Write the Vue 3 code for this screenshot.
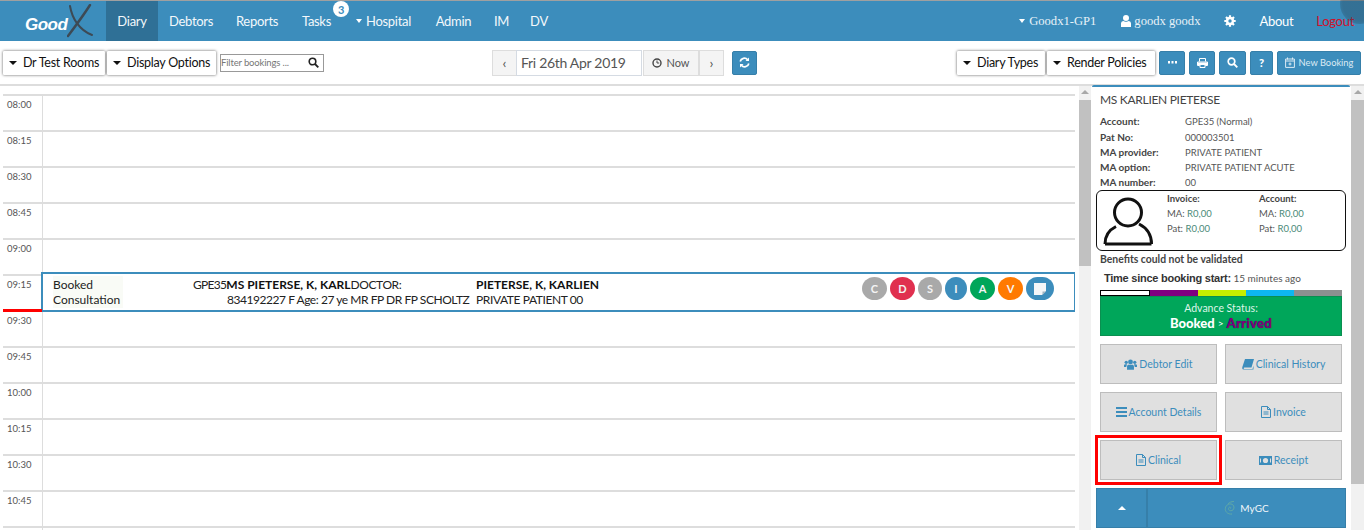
<script setup>
const navItems = [
  { label: 'Diary', w: 52, active: true },
  { label: 'Debtors', w: 66 },
  { label: 'Reports', w: 66 },
  { label: 'Tasks', w: 53 }
]
const navAfter = [
  { label: 'Admin', w: 59 },
  { label: 'IM', w: 37 },
  { label: 'DV', w: 38 }
]
const times = ['08:00','08:15','08:30','08:45','09:00','09:15','09:30','09:45','10:00','10:15','10:30','10:45','']
const details = [
  ['Account:', 'GPE35 (Normal)'],
  ['Pat No:', '000003501'],
  ['MA provider:', 'PRIVATE PATIENT'],
  ['MA option:', 'PRIVATE PATIENT ACUTE'],
  ['MA number:', '00']
]
const circles = [
  { t: 'C', c: '#a9a9a9', w: 25 },
  { t: 'D', c: '#e0304f', w: 25 },
  { t: 'S', c: '#a9a9a9', w: 24 },
  { t: 'I', c: '#3c8dbc', w: 22 },
  { t: 'A', c: '#00a65a', w: 25 },
  { t: 'V', c: '#ff7a00', w: 25 }
]
const stages = ['#fff', '#800080', '#c6ee00', '#0db7f0', '#8d9090']
</script>

<template>
  <div class="page">
    <header class="nav">
      <div class="logo">
        <span class="good">Good</span>
        <svg class="logo-x" width="26" height="34" viewBox="0 0 26 34">
          <path d="M23 1C18 9 10 20 1 32" stroke="#3d4a55" stroke-width="2.4" fill="none" stroke-linecap="round"/>
          <path d="M3 2C5 14 12 26 25 31" stroke="#3d4a55" stroke-width="2" fill="none" stroke-linecap="round"/>
        </svg>
      </div>
      <a v-for="n in navItems" :key="n.label" class="nav-item" :class="{ active: n.active }" :style="{ width: n.w + 'px' }">{{ n.label }}</a>
      <span class="badge">3</span>
      <a class="nav-item hospital"><i class="caret white"></i>Hospital</a>
      <a v-for="n in navAfter" :key="n.label" class="nav-item" :style="{ width: n.w + 'px' }">{{ n.label }}</a>
      <div class="nav-right">
        <span class="serif"><i class="caret white"></i>Goodx1-GP1</span>
        <span class="serif user">
          <svg width="10" height="12" viewBox="0 0 10 12"><circle cx="5" cy="3" r="3" fill="#fff"/><path d="M0 12V8.500C0 6.800 1.500 6 2.500 6 3.500 7 6.500 7 7.500 6 8.500 6 10 6.800 10 8.500V12Z" fill="#fff"/></svg>
          goodx goodx
        </span>
        <svg class="gear" width="12" height="12" viewBox="0 0 12 12"><path d="M6 .3V11.700M.3 6H11.700M2 2L10 10M10 2L2 10" stroke="#fff" stroke-width="2.200"/><circle cx="6" cy="6" r="4.200" fill="#fff"/><circle cx="6" cy="6" r="1.700" fill="#3c8dbc"/></svg>
        <span class="about">About</span>
        <span class="logout">Logout</span>
      </div>
    </header>

    <div class="toolbar">
      <div class="tool-left">
        <button class="drop"><i class="caret"></i>Dr Test Rooms</button>
        <button class="drop"><i class="caret"></i>Display Options</button>
        <div class="filter">
          <span>Filter bookings ...</span>
          <svg width="11" height="11" viewBox="0 0 11 11"><circle cx="4.500" cy="4.500" r="3.300" fill="none" stroke="#222" stroke-width="1.600"/><path d="M7 7L10.300 10.300" stroke="#222" stroke-width="1.800"/></svg>
        </div>
      </div>
      <div class="tool-mid">
        <span class="dbtn prev">‹</span>
        <span class="date">Fri 26th Apr 2019</span>
        <span class="dbtn now">
          <svg width="10" height="10" viewBox="0 0 10 10"><circle cx="5" cy="5" r="4" fill="none" stroke="#444" stroke-width="1.400"/><path d="M5 2.500V5H7.200" fill="none" stroke="#444" stroke-width="1"/></svg>
          Now
        </span>
        <span class="dbtn next">›</span>
        <span class="bbtn refresh">
          <svg width="11" height="11" viewBox="0 0 11 11"><path d="M1.200 4.500A4.200 4.200 0 0 1 8.600 2.800M9.800 6.500A4.200 4.200 0 0 1 2.400 8.200" fill="none" stroke="#fff" stroke-width="1.700"/><path d="M10 0.500V4H6.500ZM1 10.500V7H4.500Z" fill="#fff"/></svg>
        </span>
      </div>
      <div class="tool-right">
        <button class="drop types"><i class="caret"></i>Diary Types</button>
        <button class="drop policies"><i class="caret"></i>Render Policies</button>
        <span class="bbtn w26">
          <svg width="9" height="3" viewBox="0 0 9 3"><path d="M0 0H2V2.500H0ZM3.500 0H5.500V2.500H3.500ZM7 0H9V2.500H7Z" fill="#fff"/></svg>
        </span>
        <span class="bbtn w26">
          <svg width="11" height="10" viewBox="0 0 11 10"><path d="M2.500 3.500V.5H8.500V3.500M.5 7.500V4H10.500V7.500H8.500V6H2.500V7.500ZM3 6.500H8V9.500H3Z" fill="none" stroke="#fff"/><path d="M1 4.500H10V7H1Z" fill="#fff"/></svg>
        </span>
        <span class="bbtn w27">
          <svg width="11" height="11" viewBox="0 0 11 11"><circle cx="4.500" cy="4.500" r="3.300" fill="none" stroke="#fff" stroke-width="1.700"/><path d="M7 7L10.300 10.300" stroke="#fff" stroke-width="1.900"/></svg>
        </span>
        <span class="bbtn w23 q">?</span>
        <span class="bbtn newb">
          <svg width="10" height="11" viewBox="0 0 10 11"><path d="M0.600 2H9.400V10.400H0.600ZM0.600 4H9.400M2.500 0.500V2.500M7.500 0.500V2.500M3.500 7H6.500M5 5.500V8.500" fill="none" stroke="#dcebf4" stroke-width="1"/></svg>
          New Booking
        </span>
      </div>
    </div>

    <main class="body">
      <section class="diary">
        <div v-for="t in times" :key="t" class="row">
          <span class="time">{{ t }}</span>
          <span class="slot"></span>
          <i v-if="t === '09:15'" class="now-line"></i>
          <div v-if="t === '09:15'" class="booking">
            <div class="b-status"><span>Booked</span><span>Consultation</span></div>
            <div class="b-info">
              <div class="b-top"><span class="acc">GPE35</span><b>MS PIETERSE, K, KARL</b><span class="doc">DOCTOR:</span></div>
              <div class="b-sub">834192227 F Age: 27 ye MR FP DR FP SCHOLTZ</div>
            </div>
            <div class="b-pat"><b>PIETERSE, K, KARLIEN</b><span class="pp">PRIVATE PATIENT 00</span></div>
            <div class="b-icons">
              <span v-for="c in circles" :key="c.t" class="circle" :style="{ background: c.c, width: c.w + 'px' }">{{ c.t }}</span>
              <span class="circle note">
                <svg width="12" height="12" viewBox="0 0 12 12"><path d="M0 0H12V8L8 12H0Z" fill="#f4f6f8"/><path d="M8.500 12V8.500H12Z" fill="#9fb4c2"/></svg>
              </span>
            </div>
          </div>
        </div>
      </section>

      <div class="scroll left-scroll"><i class="arrow"></i><i class="thumb"></i></div>

      <aside class="panel">
        <h3>MS KARLIEN PIETERSE</h3>
        <dl class="details">
          <template v-for="d in details" :key="d[0]">
            <dt>{{ d[0] }}</dt>
            <dd>{{ d[1] }}</dd>
          </template>
        </dl>
        <div class="balance">
          <svg class="avatar" width="50" height="50" viewBox="0 0 50 50">
            <circle cx="25" cy="15.500" r="13.500" fill="none" stroke="#111" stroke-width="3"/>
            <path d="M2 47C2 38 6 33 13 29.500M36 27C44 31 48.500 38 48.500 47M2 47H48.500" fill="none" stroke="#111" stroke-width="3"/>
          </svg>
          <div class="bal-col first"><b>Invoice:</b><span>MA: <em>R0,00</em></span><span>Pat: <em>R0,00</em></span></div>
          <div class="bal-col second"><b>Account:</b><span>MA: <em>R0,00</em></span><span>Pat: <em>R0,00</em></span></div>
        </div>
        <p class="benefits">Benefits could not be validated</p>
        <p class="since"><b>Time since booking start:</b> <span>15 minutes ago</span></p>
        <div class="stages">
          <i v-for="(s, i) in stages" :key="s" :class="{ current: i === 0 }" :style="{ background: s }"></i>
        </div>
        <div class="advance">
          <span>Advance Status:</span>
          <div class="adv-line"><b>Booked</b><small>&gt;</small><b class="arrived">Arrived</b></div>
        </div>
        <div class="actions">
          <a class="act">
            <svg width="13" height="11" viewBox="0 0 15 12"><circle cx="7.500" cy="3" r="2.800" fill="#3c8dbc"/><circle cx="2.600" cy="3.500" r="1.900" fill="#3c8dbc"/><circle cx="12.400" cy="3.500" r="1.900" fill="#3c8dbc"/><path d="M3.500 12V8.500C3.500 7 4.500 6.300 5.500 6.300H9.500C10.500 6.300 11.500 7 11.500 8.500V12ZM0 9V7C0 6 .8 5.600 2 5.600H3.500L2.600 8.500V9ZM15 9V7C15 6 14.200 5.600 13 5.600H11.500L12.400 8.500V9Z" fill="#3c8dbc"/></svg>
            Debtor Edit
          </a>
          <a class="act">
            <svg width="12" height="12" viewBox="0 0 12 12"><path d="M3 1H12L9.500 9.500H2.300C1.500 9.500 1.500 11 2.300 11H10.500L11.500 7.500V11.500H1.500C0 11.500 0 9.500 .5 8.500Z" fill="#3c8dbc"/></svg>
            Clinical History
          </a>
          <a class="act">
            <svg width="11" height="10" viewBox="0 0 11 10"><path d="M0 0H11V2H0ZM0 4H11V6H0ZM0 8H11V10H0Z" fill="#3c8dbc"/></svg>
            Account Details
          </a>
          <a class="act">
            <svg width="10" height="12" viewBox="0 0 10 12"><path d="M.5 .5H6.500L9.500 3.500V11.500H.5ZM6.500 .5V3.500H9.500M2.500 6H7.500M2.500 8H7.500" fill="none" stroke="#3c8dbc" stroke-width="1"/></svg>
            Invoice
          </a>
          <a class="act highlighted">
            <svg width="10" height="12" viewBox="0 0 10 12"><path d="M.5 .5H6.500L9.500 3.500V11.500H.5ZM6.500 .5V3.500H9.500M2.500 6H7.500M2.500 8H7.500" fill="none" stroke="#3c8dbc" stroke-width="1"/></svg>
            Clinical
          </a>
          <a class="act">
            <svg width="13" height="9" viewBox="0 0 13 9"><path d="M0 0H13V9H0Z" fill="#3c8dbc"/><circle cx="6.500" cy="4.500" r="2.600" fill="#e0e0e0"/><path d="M1.500 2.500V6.500M11.500 2.500V6.500" stroke="#e0e0e0"/></svg>
            Receipt
          </a>
        </div>
        <div class="mygc">
          <span class="mygc-toggle"><i class="caret up"></i></span>
          <span class="mygc-label">
            <svg width="13" height="14" viewBox="0 0 13 14"><path d="M6.500 7.500C7.500 6.500 6 5.500 5 6.500 3.500 8 5.500 10.500 8 9.500 11 8.300 10.500 3.500 7 3 4 2.500 1 5 1.300 8.500 1.500 11 4 13.500 8 13M10 .5C7 .5 5.500 1.500 4 2.800" fill="none" stroke="#5fa8a8" stroke-width="1"/></svg>
            MyGC
          </span>
        </div>
      </aside>

      <div class="scroll right-scroll"><i class="arrow"></i><i class="thumb"></i></div>
    </main>
  </div>
</template>

<style>
html, body { margin: 0; height: 530px; overflow: hidden; background: #fff; }
</style>

<style scoped>
.page {
  width: 1364px; height: 530px; overflow: hidden; display: flex; flex-direction: column;
  font-family: "Lato", "Noto Sans", sans-serif; color: #222; box-sizing: border-box;
}
i { display: block; font-style: normal; }
button { font-family: inherit; cursor: pointer; }

.nav {
  height: 40px; flex: none; display: flex; align-items: center; background: #3c8dbc;
  border-top: 1px solid #a0a0a0; color: #fff; font-size: 13px; letter-spacing: -.3px; position: relative;
}
.nav::after {
  content: ""; position: absolute; right: -16px; top: -17px; width: 40px; height: 40px; border-radius: 50%;
  background: radial-gradient(circle, rgba(40,70,90,.4) 0 60%, rgba(40,70,90,0) 100%);
}
.logo { width: 106px; height: 40px; flex: none; display: flex; align-items: center; padding-left: 25px; box-sizing: border-box; }
.good { font-weight: 900; font-style: italic; font-size: 17px; letter-spacing: -.5px; color: #fff; font-family: "Liberation Sans", sans-serif; margin-top: 8px; }
.nav-item { height: 40px; display: flex; align-items: center; justify-content: center; flex: none; color: #f3f8fb; }
.nav-item.active { background: #2f7096; }
.badge {
  width: 16px; height: 16px; border-radius: 50%; background: #fff; color: #3c8dbc; font-size: 11px; font-weight: 700;
  display: flex; align-items: center; justify-content: center; margin: -24px 0 0 -10px; flex: none;
}
.hospital { margin-left: 7px; width: 68px; justify-content: flex-start; gap: 4px; }
.caret { width: 0; height: 0; border-left: 4px solid transparent; border-right: 4px solid transparent; border-top: 4px solid #111; flex: none; }
.caret.white { border-top-color: #fff; border-left-width: 3.500px; border-right-width: 3.500px; }
.caret.up { border-top: 0; border-bottom: 4px solid #fff; }
.nav-right { margin-left: auto; display: flex; align-items: center; height: 40px; padding-right: 10px; }
.serif { font-family: "Liberation Serif", serif; font-size: 12.600px; letter-spacing: 0; display: flex; align-items: center; gap: 4px; color: #e8f2f8; }
.user { margin-left: 25px; gap: 3px; }
.gear { margin-left: 24px; }
.about { margin-left: 23px; }
.logout { margin-left: 23px; color: #d0112b; }

.toolbar {
  height: 43px; flex: none; display: flex; align-items: center;
  border-bottom: 2px solid #ddd; box-sizing: content-box; padding: 0 3px;
}
.tool-left { display: flex; align-items: center; gap: 2px; }
.tool-mid { display: flex; align-items: center; margin-left: 168px; }
.tool-right { display: flex; align-items: center; margin-left: auto; gap: 4px; }
.drop {
  height: 24px; border: 0; background: #fff; box-shadow: 0 0 3px rgba(0,0,0,.65); display: flex; align-items: center; gap: 6px;
  padding: 0 4px 0 6px; font-size: 12.500px; letter-spacing: -.25px; color: #111; border-radius: 1px; white-space: nowrap; width: 102px;
}
.drop + .drop { width: 109px; }
.drop.types { width: 88px; margin-right: -2px; }
.drop.policies { width: 108px; }
.filter {
  margin-left: 2px; width: 104px; height: 18px; box-sizing: border-box; border: 1px solid #999; display: flex; align-items: center;
  justify-content: space-between; padding: 0 4px 0 0; font-size: 9.500px; letter-spacing: -.15px; color: #777;
}
.dbtn {
  height: 26px; background: #f4f4f4; border: 1px solid #ddd; box-sizing: border-box; display: flex; align-items: center; justify-content: center;
  color: #555; font-size: 11px;
}
.prev { width: 25px; font-size: 14px; }
.next { width: 25px; font-size: 14px; }
.now { width: 56px; gap: 4px; margin-left: 1px; }
.date {
  width: 126px; height: 26px; box-sizing: border-box; border: 1px solid #d5dbe3; display: flex; align-items: center; padding-left: 4px;
  font-size: 14px; letter-spacing: -.3px; color: #555; margin-left: -1px; background: #fff; white-space: nowrap;
}
.bbtn {
  height: 24px; background: #3c8dbc; border: 1px solid #367fa9; border-radius: 2px; box-sizing: border-box; display: flex; align-items: center;
  justify-content: center; color: #fff; flex: none;
}
.refresh { width: 25px; margin-left: 8px; }
.w26 { width: 26px; }
.w27 { width: 27px; }
.w23 { width: 23px; }
.q { font-weight: 900; font-size: 11px; }
.newb { width: 84px; gap: 4px; font-size: 9.300px; color: #dcebf4; }

.body { flex: 1; min-height: 0; display: flex; }
.diary { width: 1072px; margin-left: 3px; padding-top: 8px; flex: none; overflow: hidden; }
.row { height: 36px; box-sizing: border-box; border-top: 2px solid #ddd; display: flex; position: relative; }
.time { width: 40px; box-sizing: border-box; border-right: 1px solid #ddd; font-size: 9.500px; color: #555; padding: 3px 0 0 4px; flex: none; }
.slot { flex: 1; }
.now-line { position: absolute; left: 0; bottom: -2px; width: 39px; height: 3px; background: #f00; z-index: 2; }
.booking {
  position: absolute; left: 38px; right: -1px; top: -4px; height: 40px; box-sizing: border-box; border: 2px solid #3c8dbc;
  background: #fff; display: flex; font-size: 12px; line-height: 15px; color: #222; z-index: 1; padding-top: 2px;
}
.booking b { font-weight: 700; color: #111; }
.b-status { width: 70px; margin-left: 10px; display: flex; flex-direction: column; background: #f9fbf6; padding-top: 1px; white-space: nowrap; flex: none; height: 31px; }
.b-info { margin-left: 70px; width: 283px; flex: none; padding-top: 1px; white-space: nowrap; }
.b-top { display: flex; }
.acc { letter-spacing: -.7px; }
.doc { letter-spacing: -.4px; }
.b-sub { padding-left: 34px; letter-spacing: -.45px; }
.b-pat { display: flex; flex-direction: column; padding-top: 1px; white-space: nowrap; }
.pp { letter-spacing: -.4px; }
.b-icons { position: absolute; left: 819px; top: 3px; display: flex; gap: 3px; }
.circle {
  height: 23px; border-radius: 50%; display: flex; align-items: center; justify-content: center; color: #f4f4f4; font-weight: 700; font-size: 11px;
}
.note { width: 28px; background: #3c8dbc; border-radius: 12px; }

.scroll { background: #f1f1f1; flex: none; display: flex; flex-direction: column; align-items: center; }
.left-scroll { width: 12px; margin-left: 4px; margin-right: 1px; height: 444px; }
.right-scroll { width: 13px; margin-left: 1px; }
.arrow { width: 0; height: 0; border-left: 4px solid transparent; border-right: 4px solid transparent; border-bottom: 4px solid #a8a8a8; margin: 4px 0 6px; }
.scroll .thumb { width: 100%; background: #c1c1c1; }
.left-scroll .thumb { height: 166px; }
.right-scroll .thumb { height: 384px; }

.panel {
  width: 258px; flex: none; box-sizing: border-box; border-top: 2px solid #3c8dbc; border-radius: 2px 2px 0 0; padding: 6px 4px 0; margin-top: -1px; background: #fff; font-size: 9.500px; color: #555;
}
h3 { margin: 0 0 0 4px; font-weight: 400; font-size: 12px; letter-spacing: -.3px; line-height: 14px; color: #444; }
.details { margin: 7px 0 0 4px; display: grid; grid-template-columns: 85px 1fr; grid-template-rows: 16px; grid-auto-rows: 15px; line-height: 15px; }
.details dt { font-weight: 700; font-size: 10px; color: #444; }
.details dd { margin: 0; color: #555; white-space: nowrap; }
.balance {
  height: 61px; box-sizing: border-box; border: 1px solid #111; border-radius: 6px; display: flex; padding: 0 0 0 6px; line-height: 15px;
}
.avatar { flex: none; margin-top: 6px; }
.bal-col { display: flex; flex-direction: column; flex: none; }
.bal-col.first { margin-left: 14px; width: 92px; }
.bal-col.second { width: 80px; }
.bal-col b { color: #444; }
.bal-col em { font-style: normal; color: #4a8a78; }
.benefits { margin: 2px 0 0 4px; font-weight: 700; font-size: 10.400px; color: #444; line-height: 13px; }
.since { margin: 5px 0 0 8px; line-height: 14px; white-space: nowrap; font-size: 10px; }
.since b { font-family: "Liberation Sans", sans-serif; font-size: 11px; letter-spacing: -.25px; color: #333; }
.stages { display: flex; margin: 5px 4px 0; height: 6px; }
.stages i { flex: 1; }
.stages .current { border: 1px solid #000; box-sizing: border-box; }
.advance {
  margin: 0 4px; height: 40px; box-sizing: border-box; background: #00a65a; border: 1px solid #0a8f50; color: #dff5e9; display: flex; flex-direction: column;
  align-items: center; font-size: 10.500px; padding-top: 5px; line-height: 13px;
}
.adv-line { display: flex; align-items: center; gap: 3px; font-size: 13px; color: #fff; line-height: 15px; margin-top: 1px; }
.adv-line b { font-weight: 900; }
.adv-line small { font-size: 10px; }
.arrived { color: #800080; text-shadow: 0 0 1px #123; letter-spacing: .3px; }
.actions { margin: 8px 4px 0; display: grid; grid-template-columns: 117px 117px; gap: 8px; }
.act {
  height: 40px; box-sizing: border-box; background: #e0e0e0; border: 1px solid #bdbdbd; color: #3c8dbc; display: flex; align-items: center; justify-content: center;
  gap: 2px; font-size: 10.500px; white-space: nowrap;
}
.highlighted { outline: 3px solid #f00; outline-offset: 2px; }
.mygc {
  height: 40px; margin-top: 8px; box-sizing: border-box; background: #3c8dbc; border: 1px solid #367fa9; display: flex; color: #f2f7fa;
}
.mygc-toggle { width: 49px; border-right: 2px solid #367fa9; display: flex; align-items: center; justify-content: center; flex: none; }
.mygc-label { flex: 1; display: flex; align-items: center; justify-content: center; gap: 3px; font-size: 10px; }
</style>
